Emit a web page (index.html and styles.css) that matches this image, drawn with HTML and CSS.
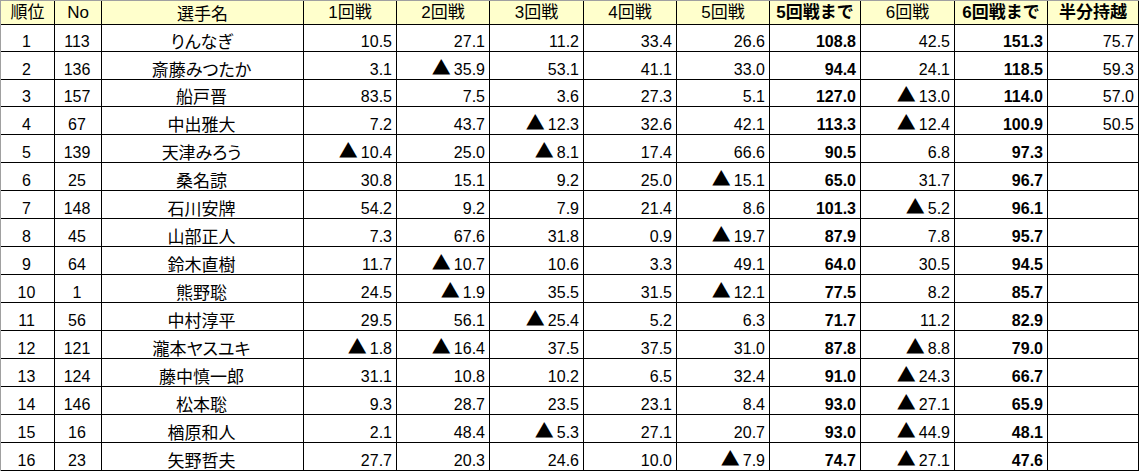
FILE: index.html
```html
<!DOCTYPE html>
<html lang="ja">
<head>
<meta charset="utf-8">
<title>成績表</title>
<link rel="stylesheet" href="styles.css">
</head>
<body>
<table class="sheet">
<thead>
<tr class="hdr">
<th class="w-rank">順位</th>
<th class="w-no">No</th>
<th class="w-name jp">選手名</th>
<th class="w93">1回戦</th>
<th class="w93">2回戦</th>
<th class="w94">3回戦</th>
<th class="w93">4回戦</th>
<th class="w93">5回戦</th>
<th class="w91 b">5回戦まで</th>
<th class="w94">6回戦</th>
<th class="w93 b">6回戦まで</th>
<th class="w91 b">半分持越</th>
</tr>
</thead>
<tbody>
<tr class="r27"><td class="c">1</td><td class="c">113</td><td class="name">りんなぎ</td><td>10.5</td><td>27.1</td><td>11.2</td><td>33.4</td><td>26.6</td><td class="b">108.8</td><td>42.5</td><td class="b">151.3</td><td class="carry">75.7</td></tr>
<tr class="r28"><td class="c">2</td><td class="c">136</td><td class="name">斎藤みつたか</td><td>3.1</td><td><span class="tri">▲</span>35.9</td><td>53.1</td><td>41.1</td><td>33.0</td><td class="b">94.4</td><td>24.1</td><td class="b">118.5</td><td class="carry">59.3</td></tr>
<tr class="r27"><td class="c">3</td><td class="c">157</td><td class="name">船戸晋</td><td>83.5</td><td>7.5</td><td>3.6</td><td>27.3</td><td>5.1</td><td class="b">127.0</td><td><span class="tri">▲</span>13.0</td><td class="b">114.0</td><td class="carry">57.0</td></tr>
<tr class="r28"><td class="c">4</td><td class="c">67</td><td class="name">中出雅大</td><td>7.2</td><td>43.7</td><td><span class="tri">▲</span>12.3</td><td>32.6</td><td>42.1</td><td class="b">113.3</td><td><span class="tri">▲</span>12.4</td><td class="b">100.9</td><td class="carry">50.5</td></tr>
<tr class="r28"><td class="c">5</td><td class="c">139</td><td class="name">天津みろう</td><td><span class="tri">▲</span>10.4</td><td>25.0</td><td><span class="tri">▲</span>8.1</td><td>17.4</td><td>66.6</td><td class="b">90.5</td><td>6.8</td><td class="b">97.3</td><td></td></tr>
<tr class="r28"><td class="c">6</td><td class="c">25</td><td class="name">桑名諒</td><td>30.8</td><td>15.1</td><td>9.2</td><td>25.0</td><td><span class="tri">▲</span>15.1</td><td class="b">65.0</td><td>31.7</td><td class="b">96.7</td><td></td></tr>
<tr class="r28"><td class="c">7</td><td class="c">148</td><td class="name">石川安牌</td><td>54.2</td><td>9.2</td><td>7.9</td><td>21.4</td><td>8.6</td><td class="b">101.3</td><td><span class="tri">▲</span>5.2</td><td class="b">96.1</td><td></td></tr>
<tr class="r28"><td class="c">8</td><td class="c">45</td><td class="name">山部正人</td><td>7.3</td><td>67.6</td><td>31.8</td><td>0.9</td><td><span class="tri">▲</span>19.7</td><td class="b">87.9</td><td>7.8</td><td class="b">95.7</td><td></td></tr>
<tr class="r28"><td class="c">9</td><td class="c">64</td><td class="name">鈴木直樹</td><td>11.7</td><td><span class="tri">▲</span>10.7</td><td>10.6</td><td>3.3</td><td>49.1</td><td class="b">64.0</td><td>30.5</td><td class="b">94.5</td><td></td></tr>
<tr class="r28"><td class="c">10</td><td class="c">1</td><td class="name">熊野聡</td><td>24.5</td><td><span class="tri">▲</span>1.9</td><td>35.5</td><td>31.5</td><td><span class="tri">▲</span>12.1</td><td class="b">77.5</td><td>8.2</td><td class="b">85.7</td><td></td></tr>
<tr class="r28"><td class="c">11</td><td class="c">56</td><td class="name">中村淳平</td><td>29.5</td><td>56.1</td><td><span class="tri">▲</span>25.4</td><td>5.2</td><td>6.3</td><td class="b">71.7</td><td>11.2</td><td class="b">82.9</td><td></td></tr>
<tr class="r28"><td class="c">12</td><td class="c">121</td><td class="name">瀧本ヤスユキ</td><td><span class="tri">▲</span>1.8</td><td><span class="tri">▲</span>16.4</td><td>37.5</td><td>37.5</td><td>31.0</td><td class="b">87.8</td><td><span class="tri">▲</span>8.8</td><td class="b">79.0</td><td></td></tr>
<tr class="r28"><td class="c">13</td><td class="c">124</td><td class="name">藤中慎一郎</td><td>31.1</td><td>10.8</td><td>10.2</td><td>6.5</td><td>32.4</td><td class="b">91.0</td><td><span class="tri">▲</span>24.3</td><td class="b">66.7</td><td></td></tr>
<tr class="r28"><td class="c">14</td><td class="c">146</td><td class="name">松本聡</td><td>9.3</td><td>28.7</td><td>23.5</td><td>23.1</td><td>8.4</td><td class="b">93.0</td><td><span class="tri">▲</span>27.1</td><td class="b">65.9</td><td></td></tr>
<tr class="r28"><td class="c">15</td><td class="c">16</td><td class="name">楢原和人</td><td>2.1</td><td>48.4</td><td><span class="tri">▲</span>5.3</td><td>27.1</td><td>20.7</td><td class="b">93.0</td><td><span class="tri">▲</span>44.9</td><td class="b">48.1</td><td></td></tr>
<tr class="r28"><td class="c">16</td><td class="c">23</td><td class="name">矢野哲夫</td><td>27.7</td><td>20.3</td><td>24.6</td><td>10.0</td><td><span class="tri">▲</span>7.9</td><td class="b">74.7</td><td><span class="tri">▲</span>27.1</td><td class="b">47.6</td><td></td></tr>
</tbody>
</table>
</body>
</html>
```
FILE: styles.css
```css
html, body {
  margin: 0;
  padding: 0;
  background: #ffffff;
}

.sheet {
  table-layout: fixed;
  border-collapse: separate;
  border-spacing: 0;
  width: 1139px;
  border-top: 1px solid #a0a0a0;
  border-left: 1px solid #a0a0a0;
  font-family: "Liberation Sans", "Noto Sans CJK JP", sans-serif;
  font-size: 16px;
  color: #000;
}

.sheet th,
.sheet td {
  box-sizing: border-box;
  border-right: 1px solid #000;
  border-bottom: 1px solid #000;
  padding: 0 4px 0 2px;
  vertical-align: bottom;
  line-height: 18px;
  white-space: nowrap;
  text-align: right;
  font-weight: normal;
}

.sheet th {
  background: #ffffcc;
  text-align: center;
  padding: 0 2px 1px;
  font-size: 17px;
  line-height: 20px;
}

.hdr { height: 24px; }
.r27 { height: 27px; }
.r28 { height: 28px; }

.w-rank { width: 54px; }
.w-no { width: 47px; }
.w-name { width: 202px; }
.w91 { width: 91px; }
.w93 { width: 93px; }
.w94 { width: 94px; }

.sheet .b { font-weight: bold; }

.sheet .c { text-align: center; }

.sheet .name {
  text-align: center;
  font-family: "Noto Sans CJK JP", sans-serif;
  font-size: 17px;
  line-height: 20px;
  font-feature-settings: "palt";
}

.jp {
  font-family: "Noto Sans CJK JP", sans-serif;
}

.tri {
  font-family: "Noto Sans CJK JP", sans-serif;
  font-size: 19px;
  line-height: 16px;
  margin-right: 3px;
}
```
